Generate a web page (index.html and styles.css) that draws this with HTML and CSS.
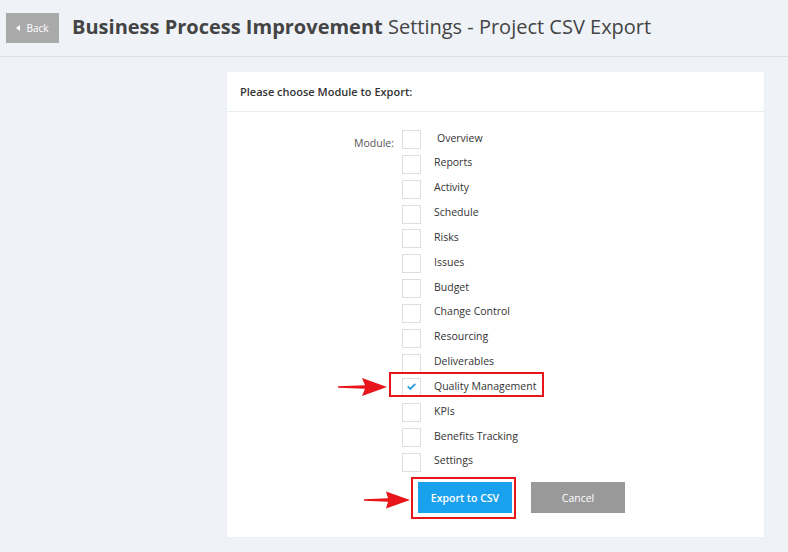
FILE: index.html
```html
<!DOCTYPE html>
<html>
<head>
<meta charset="utf-8">
<link rel="stylesheet" href="styles.css">
</head>
<body>
<header class="topbar">
  <button class="back"><span class="tri"></span>Back</button>
  <h1 class="title"><b>Business Process Improvement</b> Settings - Project CSV Export</h1>
</header>
<main class="main">
  <section class="card">
    <div class="card-head">Please choose Module to Export:</div>
    <div class="card-body">
      <div class="modules">
        <div class="mod-label">Module:</div>
        <ul class="list">
          <li class="row"><span class="box"></span><span class="name first">Overview</span></li>
          <li class="row"><span class="box"></span><span class="name">Reports</span></li>
          <li class="row"><span class="box"></span><span class="name">Activity</span></li>
          <li class="row"><span class="box"></span><span class="name">Schedule</span></li>
          <li class="row"><span class="box"></span><span class="name">Risks</span></li>
          <li class="row"><span class="box"></span><span class="name">Issues</span></li>
          <li class="row"><span class="box"></span><span class="name">Budget</span></li>
          <li class="row"><span class="box"></span><span class="name">Change Control</span></li>
          <li class="row"><span class="box"></span><span class="name">Resourcing</span></li>
          <li class="row"><span class="box"></span><span class="name">Deliverables</span></li>
          <li class="row highlight"><span class="box checked"><svg width="9" height="7" viewBox="0 0 9 7"><path d="M0.8 3.4 L3.3 5.9 L8.3 0.8" fill="none" stroke="#2a9fe3" stroke-width="1.9"/></svg></span><span class="name">Quality Management</span>
            <svg class="arrow arrow-qm" width="49" height="20" viewBox="0 0 49 20"><polygon points="0,9.3 27,8.2 24,1 49,10 24,19 27,11.8 0,10.7" fill="#e8151b"/></svg>
          </li>
          <li class="row"><span class="box"></span><span class="name">KPIs</span></li>
          <li class="row"><span class="box"></span><span class="name">Benefits Tracking</span></li>
          <li class="row"><span class="box"></span><span class="name">Settings</span></li>
        </ul>
      </div>
      <div class="actions">
        <div class="export-wrap">
          <button class="btn btn-export">Export to CSV</button>
          <svg class="arrow arrow-ex" width="46" height="18" viewBox="0 0 46 18"><polygon points="0,8.3 24,7.2 22,0.5 46,9 22,17.5 24,10.8 0,9.7" fill="#e8151b"/></svg>
        </div>
        <button class="btn btn-cancel">Cancel</button>
      </div>
    </div>
  </section>
</main>
</body>
</html>
```
FILE: styles.css
```css
*, *::before, *::after { box-sizing: border-box; }
html, body { margin: 0; padding: 0; }
body {
  background: #eff3f7;
  font-family: "Open Sans", "Liberation Sans", sans-serif;
  color: #333;
  width: 788px;
  height: 552px;
  overflow: hidden;
}
.topbar {
  height: 57px;
  border-bottom: 1px solid #d9dfe6;
  display: flex;
  align-items: flex-start;
  padding: 13px 0 0 6px;
}
.back {
  width: 53px;
  height: 30px;
  background: #aaaaaa;
  border: none;
  color: #fff;
  font-family: inherit;
  font-size: 10px;
  padding: 0;
  display: flex;
  align-items: center;
  justify-content: center;
  gap: 6px;
}
.tri {
  width: 0; height: 0;
  border-top: 3px solid transparent;
  border-bottom: 3px solid transparent;
  border-right: 4px solid #fff;
}
.title {
  margin: 0 0 0 13px;
  font-size: 20px;
  font-weight: 400;
  color: #444;
  line-height: 24px;
  padding-top: 2px;
}
.title b { font-weight: 700; }
.main {
  padding: 15px 0 0 227px;
}
.card {
  width: 537px;
  height: 465px;
  background: #fff;
  box-shadow: 0 0 1px rgba(0,0,0,0.08);
}
.card-head {
  height: 40px;
  border-bottom: 1px solid #e8ecf0;
  padding: 12px 0 0 13px;
  font-size: 11px;
  font-weight: 600;
  color: #333;
}
.card-body {
  padding-top: 18px;
}
.modules {
  display: flex;
}
.mod-label {
  width: 167px;
  text-align: right;
  font-size: 10.5px;
  color: #555;
  padding-top: 6px;
}
.list {
  list-style: none;
  margin: 0 0 0 8px;
  padding: 0;
}
.row {
  position: relative;
  height: 24.85px;
  display: flex;
  align-items: flex-start;
}
.box {
  width: 19px;
  height: 19px;
  border: 1px solid #dedede;
  display: flex;
  align-items: center;
  justify-content: center;
}
.box.checked { padding-bottom: 2px; }
.name {
  margin-left: 13px;
  margin-top: 1.5px;
  font-size: 10.5px;
  line-height: 13px;
  color: #333;
}
.name.first { margin-left: 16px; margin-top: 1.5px; }
.highlight::before {
  content: "";
  position: absolute;
  left: -13px;
  top: -6px;
  width: 155px;
  height: 25px;
  border: 2px solid #e8151b;
}
.arrow { position: absolute; }
.arrow-qm { left: -64px; top: -1.5px; }
.actions {
  display: flex;
  margin: 0 0 0 191px;
  padding-top: 4px;
  gap: 19px;
}
.export-wrap {
  position: relative;
}
.export-wrap::before {
  content: "";
  position: absolute;
  left: -7px;
  top: -5px;
  width: 105px;
  height: 42px;
  border: 2px solid #e8151b;
}
.arrow-ex { left: -54px; top: 9px; }
.btn {
  width: 94px;
  height: 31px;
  border: none;
  color: #fff;
  font-family: inherit;
  font-size: 10.5px;
  font-weight: 600;
  padding: 1px 0 0 0;
  display: block;
}
.btn-export { background: #1aa1ee; position: relative; }
.btn-cancel { background: #999999; font-weight: 400; }
```
